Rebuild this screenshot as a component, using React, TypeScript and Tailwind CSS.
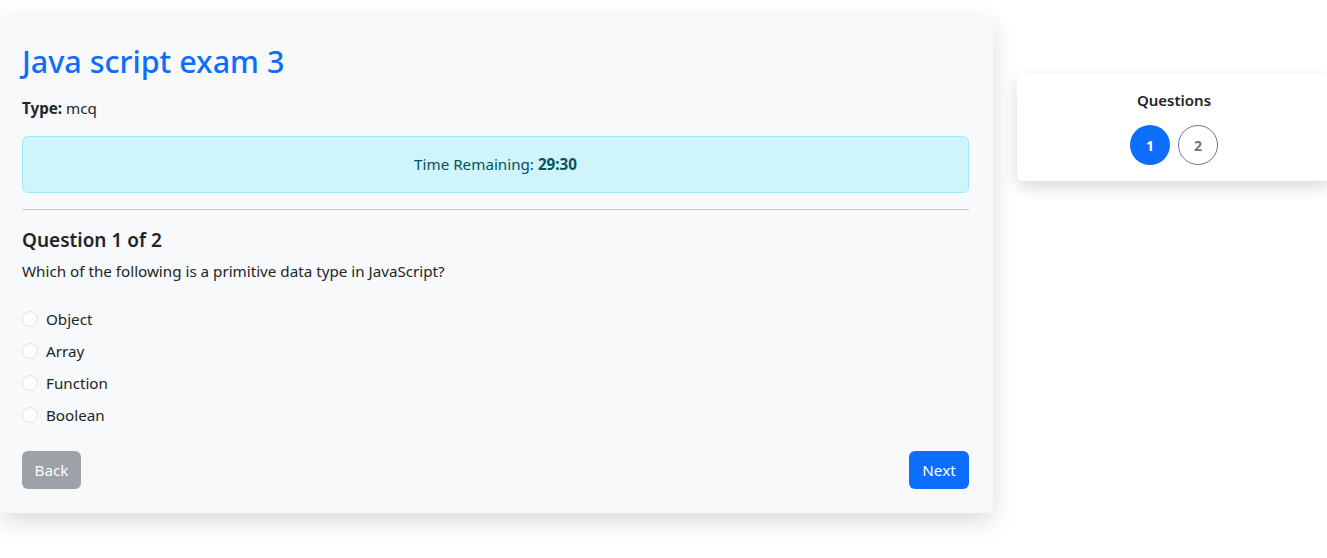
import { FC, useState } from 'react';

interface Question {
    text: string;
    options: string[];
}

const questions: Question[] = [
    {
        text: 'Which of the following is a primitive data type in JavaScript?',
        options: ['Object', 'Array', 'Function', 'Boolean'],
    },
    {
        text: 'Which keyword declares a block-scoped variable?',
        options: ['var', 'let', 'function', 'global'],
    },
];

const App: FC = () => {
    const [current, setCurrent] = useState(0);
    const [answers, setAnswers] = useState<Record<number, string>>({});
    const question = questions[current];

    return (
      <div
        className="bg-white min-h-screen overflow-hidden text-[#212529]"
        style={{ fontFamily: '"Noto Sans", "Open Sans", sans-serif' }}
      >
        <div className="flex items-start gap-[24px] pt-[17px]">
          {/* main exam card */}
          <div className="w-[993px] shrink-0 bg-[#f8f9fa] rounded-md shadow-[0_8px_24px_rgba(0,0,0,0.15)] pl-[22px] pr-[24px] pt-[24px] pb-[24px]">
            <h2 className="h-[40px] leading-[40px] text-[30.5px] font-medium text-[#0d6efd]">
              Java script exam 3
            </h2>
            <p className="mt-[15px] text-[15.2px] leading-[24px]">
              <span className="font-bold">Type:</span> mcq
            </p>
            <div className="mt-[16px] h-[57px] flex items-center justify-center bg-[#cff4fc] border border-[#9eeaf9] rounded-md text-[#055160] text-[15.2px]">
              Time Remaining:&nbsp;<span className="font-bold">29:30</span>
            </div>
            <hr className="mt-[16px] border-t border-[#c4c6c8]" />
            <h5 className="mt-[18px] text-[19px] leading-[24px] font-semibold">
              Question {current + 1} of {questions.length}
            </h5>
            <p className="mt-[7px] text-[15.2px] leading-[24px]">{question.text}</p>
            <div className="mt-[24px] flex flex-col gap-[8px]">
              {question.options.map((opt) => (
                <label key={opt} className="flex items-center h-[24px] text-[15.2px] cursor-pointer">
                  <input
                    type="radio"
                    name={`q${current}`}
                    checked={answers[current] === opt}
                    onChange={() => setAnswers({ ...answers, [current]: opt })}
                    className="appearance-none w-[16px] h-[16px] rounded-full border border-[#dee2e6] bg-white checked:bg-[#0d6efd] checked:border-[#0d6efd]"
                  />
                  <span className="ml-[8px]">{opt}</span>
                </label>
              ))}
            </div>
            <div className="mt-[24px] flex justify-between">
              <button
                disabled={current === 0}
                onClick={() => setCurrent(current - 1)}
                className="h-[38px] w-[59px] rounded-md bg-[#6c757d] opacity-65 text-white text-[15.2px]"
              >
                Back
              </button>
              <button
                onClick={() => setCurrent(Math.min(current + 1, questions.length - 1))}
                className="h-[38px] w-[60px] rounded-md bg-[#0d6efd] text-white text-[15.2px]"
              >
                Next
              </button>
            </div>
          </div>

          {/* question navigator */}
          <div className="mt-[57px] w-[314px] shrink-0 bg-white rounded-md shadow-[0_6px_16px_rgba(0,0,0,0.15)] pt-[16px] pb-[16px] flex flex-col items-center">
            <div className="h-[20px] leading-[20px] text-[15px] font-semibold">Questions</div>
            <div className="mt-[15px] flex gap-[8px]">
              {questions.map((_, i) => (
                <button
                  key={i}
                  onClick={() => setCurrent(i)}
                  className={
                    i === current
                      ? 'w-[40px] h-[40px] rounded-full bg-[#0d6efd] text-white text-[14px] font-bold'
                      : 'w-[40px] h-[40px] rounded-full border border-[#6c757d] text-[#6c757d] text-[14px] font-bold'
                  }
                >
                  {i + 1}
                </button>
              ))}
            </div>
          </div>
        </div>
      </div>
    );
};

export default App;
